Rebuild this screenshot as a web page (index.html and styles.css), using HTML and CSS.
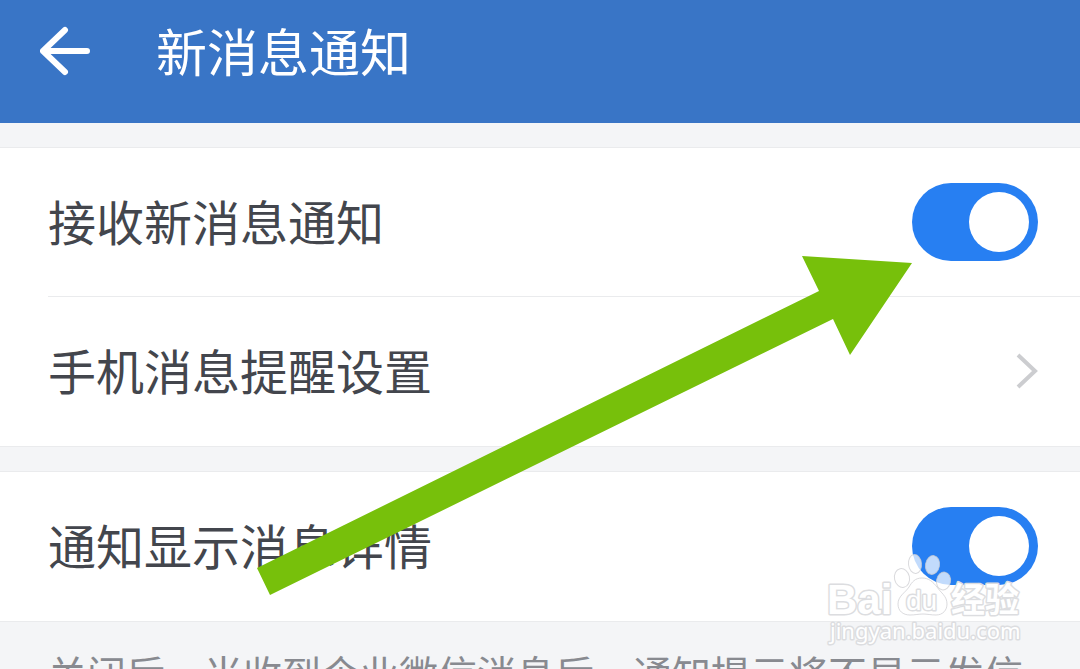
FILE: index.html
```html
<!DOCTYPE html>
<html lang="zh-CN">
<head>
<meta charset="utf-8">
<meta name="viewport" content="width=device-width, initial-scale=1">
<title>新消息通知</title>
<link rel="stylesheet" href="styles.css">
</head>
<body>
<div class="page">
  <header class="topbar">
    <button class="back" type="button" aria-label="返回">
      <svg class="back-icon" viewBox="0 0 52 50" aria-hidden="true"><path d="M25 4 3 25l22 21M3 25h44"/></svg>
    </button>
    <h1 class="title">新消息通知</h1>
  </header>
  <main>
    <section class="group">
      <div class="row row-divided">
        <label class="label" for="receive">接收新消息通知</label>
        <input class="switch" id="receive" type="checkbox" role="switch" checked>
      </div>
      <button class="row row-link" type="button">
        <span class="label">手机消息提醒设置</span>
        <svg class="chevron" viewBox="0 0 22 36" aria-hidden="true"><path d="M2 2l17 16L2 34"/></svg>
      </button>
    </section>
    <section class="group">
      <div class="row">
        <label class="label" for="detail">通知显示消息详情</label>
        <input class="switch" id="detail" type="checkbox" role="switch" checked>
      </div>
    </section>
    <p class="note">关闭后，当收到企业微信消息后，通知提示将不显示发信</p>
  </main>
  <svg class="pointer" viewBox="0 0 660 344" aria-hidden="true"><path d="M547 1l110 7-62 92-17-36L15 340 2 313 564 36z"/></svg>
  <svg class="watermark" viewBox="0 0 210 104" role="img" aria-label="Baidu 经验 jingyan.baidu.com">
    <g class="paw">
      <ellipse cx="82" cy="28" rx="7.5" ry="9.5" transform="rotate(-12 82 28)"/>
      <ellipse cx="95" cy="14" rx="6.5" ry="9.5" transform="rotate(-6 95 14)"/>
      <ellipse cx="112.5" cy="15" rx="7" ry="9.5" transform="rotate(10 112.5 15)"/>
      <ellipse cx="123.5" cy="31" rx="7" ry="9" transform="rotate(10 123.5 31)"/>
      <path d="M102 28c-7 0-10 4-13 9-4 6-11 9-11 17 0 7 5 11 12 11 5 0 9-1 13-1s8 1 13 1c7 0 11-5 11-11 0-8-6-11-10-17-4-5-8-9-15-9z"/>
    </g>
    <text class="mark-brand" x="7" y="64">Bai</text>
    <text class="mark-du" x="86" y="60">du</text>
    <text class="mark-cn" x="131" y="62">经验</text>
    <text class="mark-url" x="10" y="89">jingyan.baidu.com</text>
  </svg>
</div>
</body>
</html>
```
FILE: styles.css
```css
* {
  box-sizing: border-box;
}

html {
  overflow: hidden;
}

body {
  margin: 0;
  background: #f4f5f7;
  color: #43464d;
  font-family: "Noto Sans CJK SC", sans-serif;
}

button {
  border: 0;
  padding: 0;
  background: none;
  color: inherit;
  font: inherit;
}

.page {
  position: relative;
}

.topbar {
  display: flex;
  align-items: center;
  gap: 64px;
  padding: 15px 40px 36px;
  background: #3975c6;
  color: #fff;
}

.back {
  display: flex;
}

.back-icon {
  width: 52px;
  height: 50px;
  fill: none;
  stroke: #fff;
  stroke-width: 6;
  stroke-linecap: round;
  stroke-linejoin: round;
}

.title {
  margin: 0;
  padding-bottom: 2px;
  font-size: 51px;
  font-weight: 400;
  line-height: 70px;
}

.group {
  margin-top: 24px;
  border-top: 1px solid #eaebed;
  border-bottom: 1px solid #eaebed;
  background: #fff;
}

.row {
  position: relative;
  display: flex;
  align-items: center;
  justify-content: space-between;
  width: 100%;
  min-height: 149px;
  padding: 0 42px 2px 48px;
  text-align: left;
}

.row-divided::after {
  content: "";
  position: absolute;
  right: 0;
  bottom: 0;
  left: 48px;
  height: 1px;
  background: #eaebed;
}

.label {
  padding-bottom: 4px;
  font-size: 48px;
  font-weight: 400;
  line-height: 72px;
}

.switch {
  display: flex;
  justify-content: flex-end;
  align-items: center;
  width: 126px;
  height: 78px;
  margin: 0;
  padding: 9px;
  border-radius: 39px;
  background: #c9cbcf;
  appearance: none;
}

.switch:checked {
  background: #277ff2;
}

.switch::before {
  content: "";
  width: 60px;
  height: 60px;
  border-radius: 50%;
  background: #fff;
}

.chevron {
  width: 22px;
  height: 36px;
  fill: none;
  stroke: #cccdd0;
  stroke-width: 4;
}

.note {
  margin: 0;
  padding: 22px 48px;
  color: #888a90;
  font-size: 39px;
  font-weight: 400;
  line-height: 56px;
}

.pointer {
  position: absolute;
  top: 255px;
  left: 255px;
  width: 660px;
  height: 344px;
  fill: #77c00b;
  pointer-events: none;
}

.watermark {
  position: absolute;
  top: 550px;
  right: 50px;
  width: 210px;
  height: 104px;
  fill: rgba(255, 255, 255, 0.72);
  stroke: rgba(205, 206, 209, 0.75);
  stroke-width: 1;
  pointer-events: none;
}

.watermark text {
  fill: #fff;
  stroke: #dcdde0;
  stroke-width: 3;
  stroke-linejoin: round;
  paint-order: stroke;
}

.mark-brand,
.mark-du {
  font-family: "Liberation Sans", sans-serif;
}

.mark-brand {
  font-size: 42px;
  font-weight: 700;
}

.mark-du {
  font-size: 28px;
}

.mark-cn {
  font-family: "Noto Sans CJK SC", sans-serif;
  font-size: 34px;
  font-weight: 700;
}

.mark-url {
  font-family: "Noto Sans", sans-serif;
  font-size: 22px;
}
```
